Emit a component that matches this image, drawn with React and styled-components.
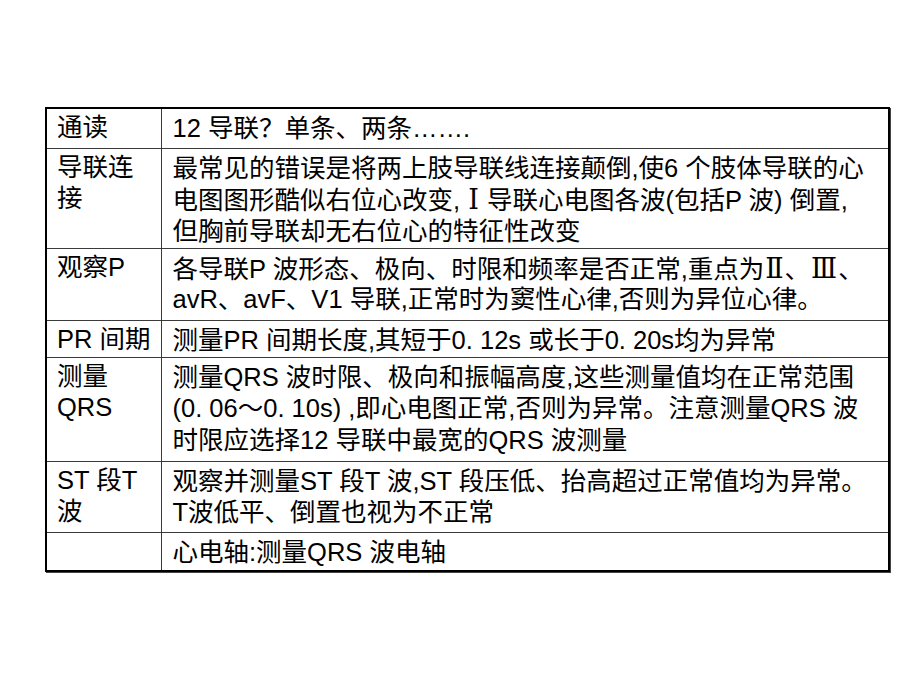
import React from "react";
import styled, { createGlobalStyle } from "styled-components";

const GlobalStyle = createGlobalStyle`
  html, body {
    margin: 0;
    padding: 0;
    background: #ffffff;
  }
  body {
    width: 920px;
    height: 690px;
    overflow: hidden;
    font-family: "Liberation Sans", "Noto Sans CJK SC", sans-serif;
    color: #000;
  }
`;

const Slide = styled.div`
  width: 920px;
  height: 690px;
  padding: 107px 0 0 45px;
  box-sizing: border-box;
`;

const Table = styled.table`
  width: 845px;
  border-collapse: collapse;
  border: 2px solid #000;
  box-shadow: 1px 1px 0 #444;
  font-size: 25.5px;
`;

const Row = styled.tr`
  height: ${(p) => p.$h}px;
`;

const Head = styled.td`
  width: 90px;
  border: 1px solid #3a3a3a;
  padding: 3px 10px 0 10px;
  vertical-align: top;
  white-space: nowrap;
`;

const Body = styled.td`
  border: 1px solid #3a3a3a;
  padding: 4px 6px 0 11px;
  vertical-align: top;
`;

const Line = styled.span`
  display: block;
  height: 31.5px;
  line-height: 31.5px;
  white-space: nowrap;
`;

const Roman = styled.span`
  font-family: "DejaVu Serif", "Liberation Serif", serif;
  font-size: 27px;
  margin: 0 1px;
`;

const rows = [
  { h: 40, head: ["通读"], body: ["12 导联？单条、两条……."] },
  {
    h: 100,
    head: ["导联连", "接"],
    body: [
      "最常见的错误是将两上肢导联线连接颠倒,使6 个肢体导联的心",
      <>
        电图图形酷似右位心改变, <Roman>Ⅰ</Roman> 导联心电图各波(包括P 波) 倒置,
      </>,
      "但胸前导联却无右位心的特征性改变",
    ],
  },
  {
    h: 72,
    head: ["观察P"],
    body: [
      <>
        各导联P 波形态、极向、时限和频率是否正常,重点为<Roman>Ⅱ</Roman>、
        <Roman>Ⅲ</Roman>、
      </>,
      "avR、avF、V1 导联,正常时为窦性心律,否则为异位心律。",
    ],
  },
  {
    h: 37,
    head: ["PR 间期"],
    body: ["测量PR 间期长度,其短于0. 12s 或长于0. 20s均为异常"],
  },
  {
    h: 104,
    head: ["测量", "QRS"],
    body: [
      "测量QRS 波时限、极向和振幅高度,这些测量值均在正常范围",
      "(0. 06～0. 10s) ,即心电图正常,否则为异常。注意测量QRS 波",
      "时限应选择12 导联中最宽的QRS 波测量",
    ],
  },
  {
    h: 71,
    head: ["ST 段T", "波"],
    body: [
      "观察并测量ST 段T 波,ST 段压低、抬高超过正常值均为异常。",
      "T波低平、倒置也视为不正常",
    ],
  },
  { h: 39, head: [""], body: ["心电轴:测量QRS 波电轴"] },
];

export default function App() {
  return (
    <>
      <GlobalStyle />
      <Slide>
        <Table>
          <tbody>
            {rows.map((row, i) => (
              <Row key={i} $h={row.h}>
                <Head>
                  {row.head.map((t, j) => (
                    <Line key={j}>{t || "\u00a0"}</Line>
                  ))}
                </Head>
                <Body>
                  {row.body.map((t, j) => (
                    <Line key={j}>{t}</Line>
                  ))}
                </Body>
              </Row>
            ))}
          </tbody>
        </Table>
      </Slide>
    </>
  );
}
